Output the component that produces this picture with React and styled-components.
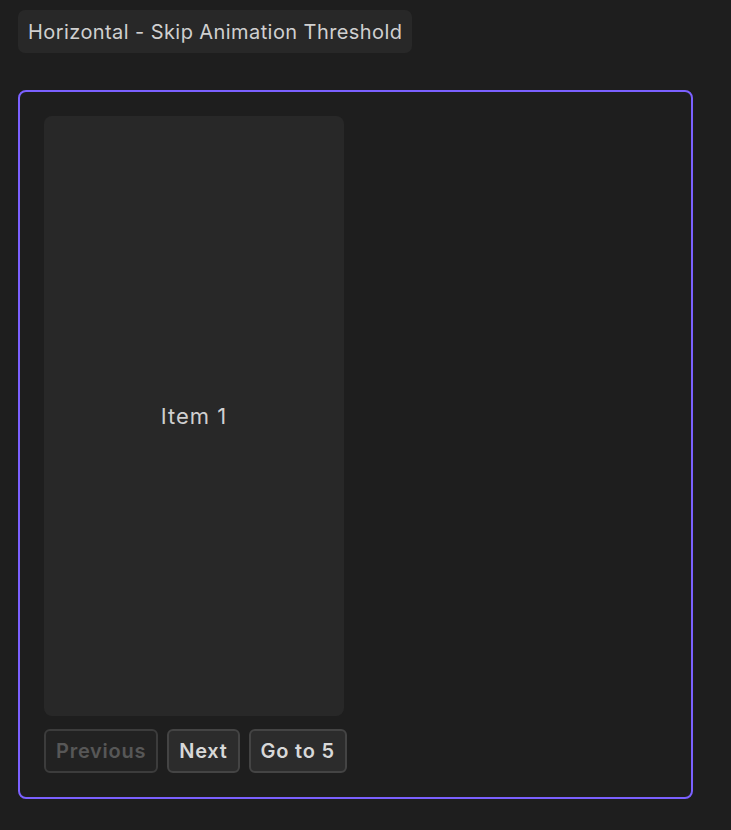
import React from "react";
import styled, { createGlobalStyle } from "styled-components";

const GlobalStyle = createGlobalStyle`
  html, body {
    margin: 0;
    background: #1e1e1e;
  }
  body {
    font-family: Inter, "Noto Sans", sans-serif;
    color: #d4d4d4;
  }
`;

const Page = styled.div`
  padding: 10px 18px 31px;
  display: flex;
  flex-direction: column;
  align-items: flex-start;
  gap: 37px;
`;

const Title = styled.div`
  background: #282828;
  border-radius: 7px;
  padding: 0 10px;
  height: 43px;
  display: flex;
  align-items: center;
  font-size: 20px;
  letter-spacing: 0.42px;
  color: #d0d0d0;
`;

const Frame = styled.div`
  box-sizing: border-box;
  width: 675px;
  border: 2px solid #7b61ff;
  border-radius: 8px;
  padding: 24px;
  display: flex;
  flex-direction: column;
  gap: 13px;
`;

const Item = styled.div`
  width: 300px;
  height: 600px;
  background: #282828;
  border-radius: 8px;
  display: flex;
  align-items: center;
  justify-content: center;
  font-size: 22px;
  letter-spacing: 1px;
  color: #d0d0d0;
`;

const Controls = styled.div`
  display: flex;
  gap: 9px;
`;

const Button = styled.button`
  box-sizing: border-box;
  height: 44px;
  padding: 0 10px;
  border: 2px solid #444;
  border-radius: 6px;
  background: ${(p) => (p.disabled ? "#242424" : "#2c2c2c")};
  color: ${(p) => (p.disabled ? "#666" : "#d8d8d8")};
  font-family: Inter, "Noto Sans", sans-serif;
  font-weight: 600;
  font-size: 20px;
  letter-spacing: 0.75px;
  cursor: ${(p) => (p.disabled ? "default" : "pointer")};
  opacity: ${(p) => (p.disabled ? 0.8 : 1)};
`;

export default function App() {
  return (
    <>
      <GlobalStyle />
      <Page>
        <Title>Horizontal - Skip Animation Threshold</Title>
        <Frame>
          <Item>Item 1</Item>
          <Controls>
            <Button disabled>Previous</Button>
            <Button>Next</Button>
            <Button>Go to 5</Button>
          </Controls>
        </Frame>
      </Page>
    </>
  );
}
